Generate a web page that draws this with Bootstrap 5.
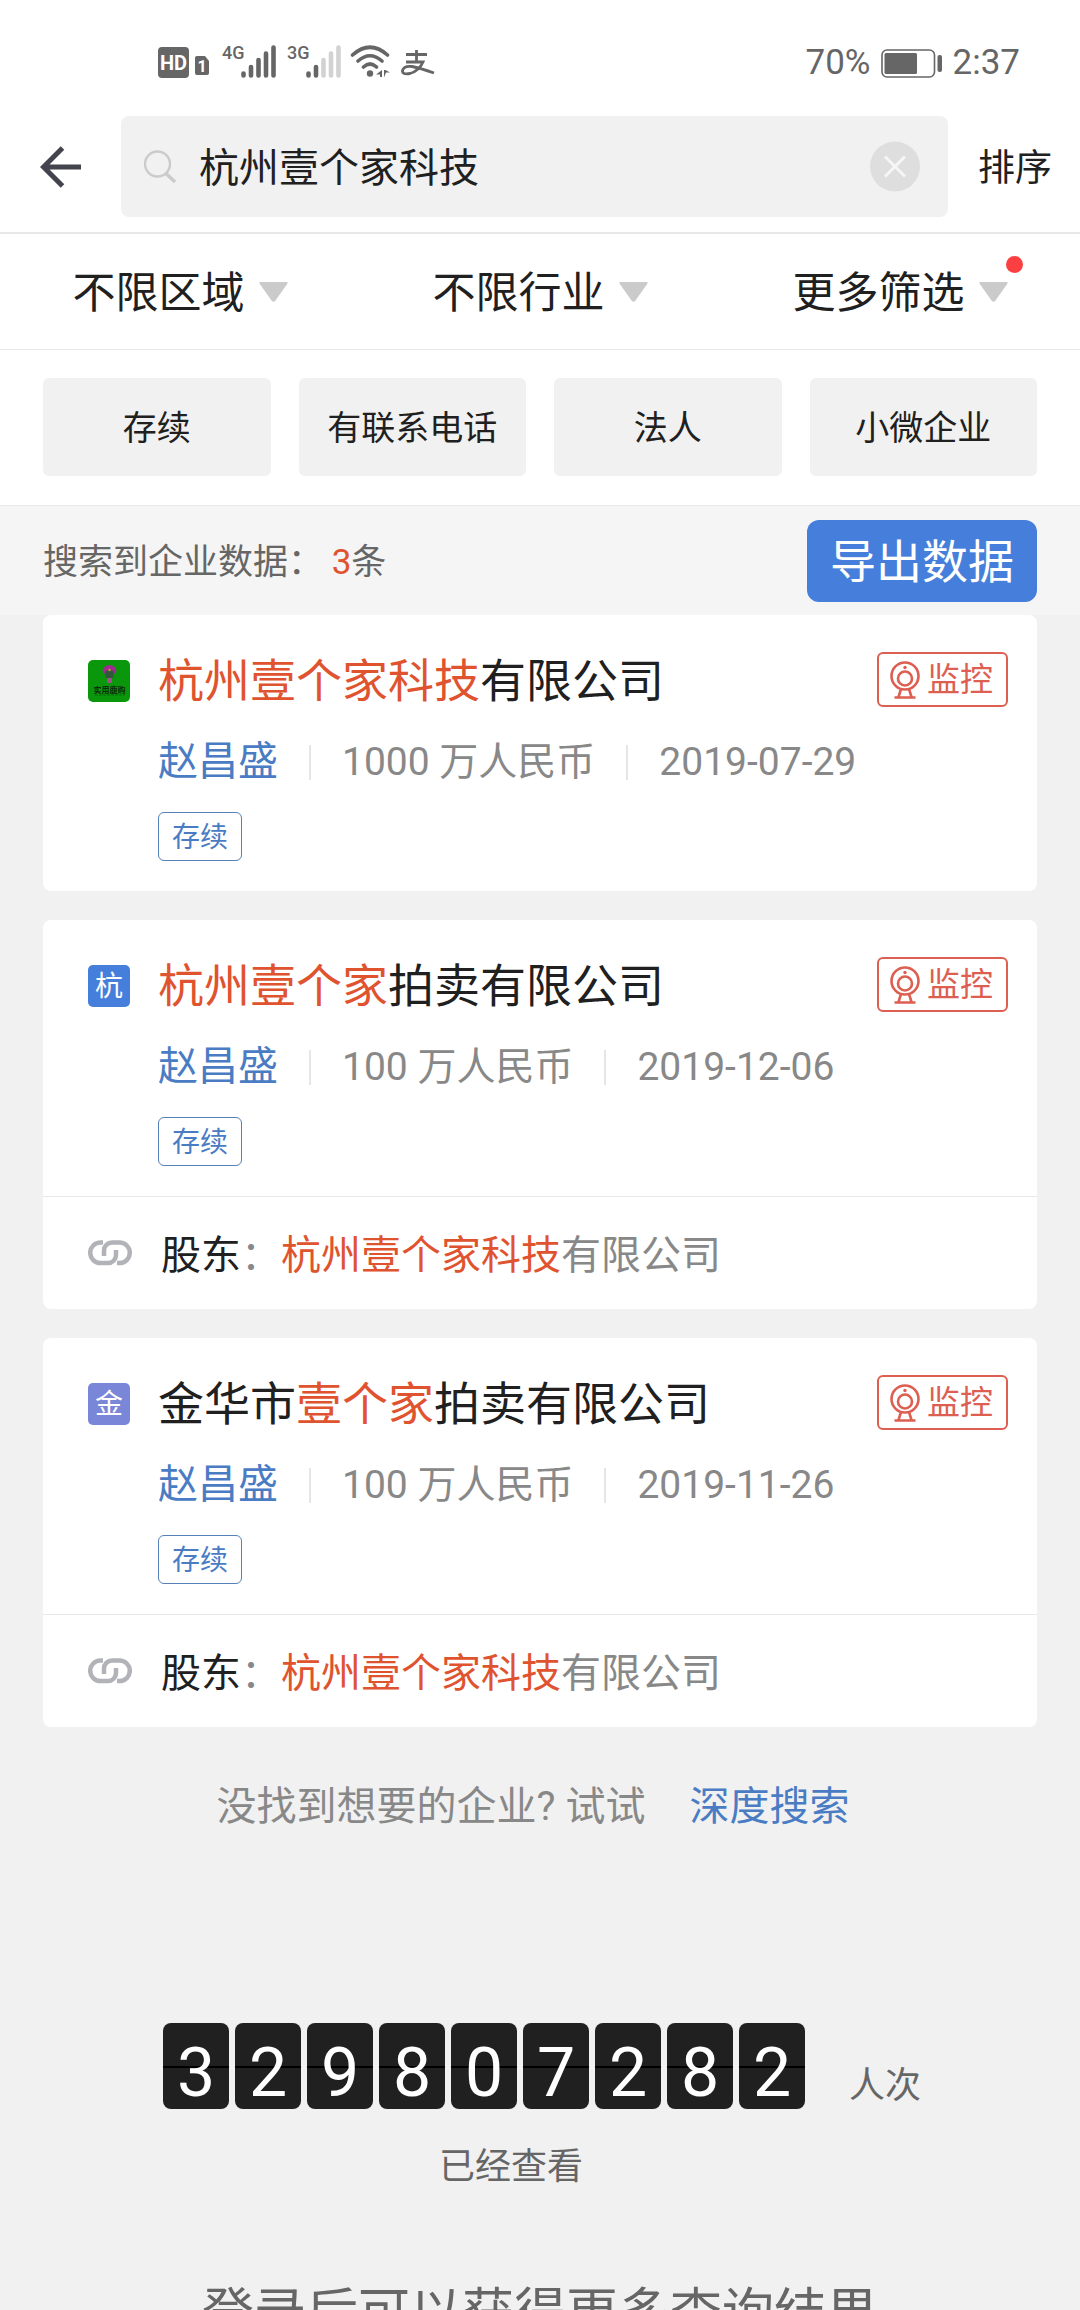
<!DOCTYPE html>
<html lang="zh-CN">
<head>
<meta charset="utf-8">
<meta name="viewport" content="width=device-width, initial-scale=1">
<title>企业搜索</title>
<link href="https://cdn.jsdelivr.net/npm/bootstrap@5.3.0/dist/css/bootstrap.min.css" rel="stylesheet">
<style>
  :root {
    --app-ink: #202020;
    --app-soft: #888;
    --app-dim: #666;
    --app-blue: #467fdb;
    --app-link: #4a7cc4;
    --app-hit: #e0532f;
    --app-alert: #dc5f52;
    --app-fill: #f1f1f1;
    --app-line: #e8e8e8;
  }
  body { font-family: Roboto, "Noto Sans CJK SC", sans-serif; color: var(--app-ink); background: var(--app-fill); }
  a { text-decoration: none; color: var(--app-link); }
  svg { display: block; flex: none; }
  .btn { --bs-btn-line-height: 1; border-radius: 6px; padding: 2px 0 0; }

  .status-bar { height: 102px; padding: 42px 60px 0 157px; color: var(--app-dim); font-size: 35px; line-height: 42px; }
  .status-right { gap: 10px; }
  .top-bar { padding: 14px 28px 15px 40px; border-bottom: 2px solid var(--app-line); }
  .search-box { height: 101px; border-radius: 8px; background: var(--app-fill); padding: 0 28px 0 23px; margin-left: 40px; gap: 23px; }
  .search-box input { font-size: 40px; line-height: 60px; color: var(--app-ink); min-width: 0; padding: 5px 0 0; }
  .top-bar .sort-btn { font-size: 37px; margin-left: 30px; padding-top: 4px; color: var(--app-ink); }
  .top-bar .icon-btn { padding: 0; }

  .filter-bar { height: 116px; border-bottom: 1px solid var(--app-line); }
  .filter-item { gap: 14px; }
  .filter-item select { appearance: none; border: 0; padding: 3px 0 0; background: none; font-size: 43px; line-height: 64px; color: var(--app-ink); }
  .filter-dot { width: 17px; height: 17px; background: #fc4041; right: -15px; top: -2px; }

  .page-x { padding-left: 43px; padding-right: 43px; }
  .chip-row { padding-top: 28px; padding-bottom: 29px; gap: 28px; border-bottom: 1px solid var(--app-line); }
  .chip-row .btn { flex: 1 1 0; height: 98px; background: var(--app-fill); font-size: 34px; color: var(--app-ink); }

  .count-bar { height: 109px; background: #f5f5f5; color: var(--app-dim); font-size: 35px; }
  .count-text { padding-top: 6px; }
  .count-bar .export-btn { width: 230px; height: 82px; border-radius: 12px; background: var(--app-blue); color: #fff; font-size: 46px; }
  .hit { color: var(--app-hit); }

  .result-list { gap: 29px; }
  .result { border: 0; border-radius: 8px; background: #fff; }
  .result .card-body { padding: 37px 29px 30px 45px; gap: 28px; }
  .co-logo { width: 42px; height: 42px; border-radius: 5px; margin-top: 8px; font-size: 28px; line-height: 44px; color: #fff; overflow: hidden; flex: none; }
  .logo-blue { background: var(--app-blue); }
  .logo-violet { background: #7a86d8; }
  .co-name { font-size: 46px; line-height: 52px; padding-top: 3px; font-weight: 400; }
  .watch-btn { width: 131px; height: 55px; border: 2px solid var(--app-alert); color: var(--app-alert); font-size: 33px; gap: 7px; }
  .result .watch-btn { padding: 0 2px 0 0; }
  .co-meta { font-size: 39px; line-height: 54px; margin-top: 28px; color: var(--app-soft); gap: 31px; }
  .co-meta a { font-size: 40px; }
  .meta-rule { width: 2px; height: 35px; background: #e6e6e6; }
  .co-tag { margin-top: 23px; padding: 3px 13px 0; border: 1px solid #5580b8; border-radius: 6px; color: var(--app-link); font-size: 28px; line-height: 44px; }
  .holder { padding: 0 45px; height: 113px; border-top: 1px solid var(--app-line); font-size: 40px; gap: 29px; color: var(--app-soft); }
  .holder-text { padding-top: 5px; }
  .holder b { font-weight: 400; color: var(--app-ink); }

  .more-line { padding: 50px 14px 0 0; gap: 44px; font-size: 40px; line-height: 60px; color: var(--app-soft); }
  .counter { margin-top: 186px; padding-left: 4px; gap: 44px; }
  .flip-row { gap: 6px; }
  .flip { width: 66px; height: 86px; border-radius: 8px; background: linear-gradient(#202020 43px, #000 43px, #000 45px, #202020 45px); color: #fff; font-size: 68px; line-height: 100px; }
  .unit { font-size: 36px; line-height: 46px; color: var(--app-dim); }
  .seen { margin-top: 35px; padding-right: 58px; }
  .login-tip { margin-top: 86px; font-size: 52px; line-height: 76px; color: var(--app-dim); }
</style>
</head>
<body class="vh-100 overflow-hidden">

<!-- icons shared by the filters and the result cards -->
<svg width="0" height="0" class="position-absolute" aria-hidden="true">
  <symbol id="ico-cam" viewBox="0 0 30 38">
    <g fill="none" stroke="currentColor" stroke-width="2.600">
      <circle cx="15" cy="15" r="13.500"/><circle cx="15" cy="17.500" r="7"/>
      <path d="M11 28L8.500 36M19 28L21.500 36M4.500 36.500H25.500"/>
    </g>
    <circle cx="15" cy="6.500" r="1.700" fill="currentColor"/>
  </symbol>
  <symbol id="ico-link" viewBox="0 0 44 26">
    <g fill="none" stroke="#b2b3b8" stroke-width="4.500">
      <path d="M15 2.500H12.500a10.300 10.300 0 0 0 0 20.600H20a8 8 0 0 0 8-8V10"/>
      <path d="M29 23.100H31.500a10.300 10.300 0 0 0 0-20.600H24a8 8 0 0 0-8 8V16"/>
    </g>
  </symbol>
  <symbol id="ico-caret" viewBox="0 0 29 20"><path d="M1.500 0H27.500Q29.500 0 28 2.200L16.500 18.500Q14.500 21 12.500 18.500L1 2.200Q-.5 0 1.500 0Z" fill="#cbcbcb"/></symbol>
</svg>

<header class="bg-white">
  <div class="status-bar d-flex justify-content-between align-items-start">
    <svg width="280" height="40" viewBox="0 0 280 40" role="img" aria-label="HD 4G 3G WLAN" font-family="Roboto, sans-serif" font-weight="700" fill="#666">
      <rect x="1" y="5" width="31" height="31" rx="4"/>
      <text x="16.500" y="27.500" font-size="20" text-anchor="middle" fill="#fff">HD</text>
      <path d="M40 33a2 2 0 0 1-2-2V16a2 2 0 0 1 2-2h8l4 5v12a2 2 0 0 1-2 2z"/>
      <text x="45" y="30" font-size="16" text-anchor="middle" fill="#fff">1</text>
      <text x="65" y="17" font-size="18" font-weight="500">4G</text>
      <g stroke="#666" stroke-width="4.600" stroke-linecap="round">
        <path d="M86.500 31.500V33.500M94 25V33.500M101.500 18V33.500M109 11.500V33.500M116.500 5.500V33.500"/>
        <path d="M151.500 31.500V33.500M159 25V33.500"/>
        <path d="M166.500 18V33.500M174 11.500V33.500M181.500 5.500V33.500" stroke="#d2d2d2"/>
      </g>
      <text x="130" y="17" font-size="18" font-weight="500">3G</text>
      <g fill="none" stroke="#666" stroke-width="3.600" stroke-linecap="round">
        <path d="M195.500 13Q213 -2.500 230.500 13M201 19Q213 8.500 225 19M206.500 25Q213 19 219.500 25"/>
      </g>
      <circle cx="213" cy="31.500" r="3.200"/>
      <path d="M225 28v7h-2v-2.500h-4zM227 35.500v-7.500h1.500l4.500 2.500h-4z"/>
      <g fill="none" stroke="#666" stroke-width="2.800">
        <path d="M249 12.500H270M259.500 8V20M249 20H266Q262 29 253 31.500Q245 33 245.500 28.500Q247 23.500 255 24.500Q263 26 277 31"/>
      </g>
    </svg>
    <div class="status-right d-flex align-items-center">
      <span>70%</span>
      <svg width="62" height="29" viewBox="0 0 62 29" role="img" aria-label="电量">
        <rect x="1" y="1" width="52.500" height="27" rx="5" fill="none" stroke="#666" stroke-width="1.600"/>
        <rect x="3.500" y="4" width="32.500" height="21" rx="1.500" fill="#666"/>
        <rect x="56.500" y="6" width="4.500" height="17" rx="2" fill="#666"/>
      </svg>
      <span>2:37</span>
    </div>
  </div>

  <form class="top-bar d-flex align-items-center" role="search">
    <button type="button" class="btn border-0 icon-btn" aria-label="返回">
      <svg width="41" height="42" viewBox="0 0 41 42" fill="none" stroke="#43444d" stroke-width="5"><path d="M22.500 2L3.500 21L22.500 40M4 21H41"/></svg>
    </button>
    <div class="search-box d-flex align-items-center flex-fill">
      <svg width="32" height="33" viewBox="0 0 32 33" fill="none" stroke="#cbcbcb"><circle cx="13.500" cy="14" r="12.500" stroke-width="2.400"/><path d="M22 23.500L31 32" stroke-width="3.400"/></svg>
      <input type="text" class="flex-fill border-0 bg-transparent" value="杭州壹个家科技" aria-label="搜索企业">
      <button type="button" class="btn border-0 icon-btn" aria-label="清除">
        <svg width="50" height="51" viewBox="0 0 50 51"><circle cx="25" cy="25.500" r="25" fill="#dedede"/><path d="M15 15.500L35 35.500M35 15.500L15 35.500" stroke="#f6f6f6" stroke-width="3"/></svg>
      </button>
    </div>
    <button type="button" class="btn border-0 sort-btn">排序</button>
  </form>

  <div class="filter-bar row g-0 align-items-center">
    <div class="col d-flex justify-content-center">
      <div class="filter-item d-flex align-items-center">
        <select aria-label="区域"><option>不限区域</option></select>
        <svg width="29" height="20"><use href="#ico-caret"/></svg>
      </div>
    </div>
    <div class="col d-flex justify-content-center">
      <div class="filter-item d-flex align-items-center">
        <select aria-label="行业"><option>不限行业</option></select>
        <svg width="29" height="20"><use href="#ico-caret"/></svg>
      </div>
    </div>
    <div class="col d-flex justify-content-center">
      <div class="filter-item d-flex align-items-center position-relative">
        <select aria-label="筛选"><option>更多筛选</option></select>
        <svg width="29" height="20"><use href="#ico-caret"/></svg>
        <span class="filter-dot rounded-circle position-absolute"></span>
      </div>
    </div>
  </div>

  <div class="chip-row page-x d-flex">
    <button type="button" class="btn border-0">存续</button>
    <button type="button" class="btn border-0">有联系电话</button>
    <button type="button" class="btn border-0">法人</button>
    <button type="button" class="btn border-0">小微企业</button>
  </div>
</header>

<div class="count-bar page-x d-flex align-items-center justify-content-between">
  <div class="count-text">搜索到企业数据： <span class="hit">3</span>条</div>
  <button type="button" class="btn border-0 export-btn">导出数据</button>
</div>

<main>
  <div class="result-list page-x d-flex flex-column">

    <article class="card result">
      <div class="card-body d-flex">
        <div class="co-logo">
          <svg width="42" height="42" viewBox="0 0 42 42" role="img" aria-label="企业标志">
            <rect width="42" height="42" fill="#0a970c"/>
            <path d="M14.500 11Q16 5 21.500 5Q27 5 28.500 11Q27.500 13 26 14Q25 10 21.500 9.500Q18 10 17 14Q15 13 14.500 11Z" fill="#a32a92"/>
            <path d="M17 12Q21.500 8 26 12L25 18H18Z" fill="#31583c"/>
            <rect x="19" y="18" width="5" height="5" rx="1" fill="#a0508c"/>
            <circle cx="21.500" cy="10" r="1.200" fill="#d98a3a"/>
            <text x="21.500" y="32.500" font-size="8" font-weight="700" text-anchor="middle" fill="#0b2c0b">实用鹿购</text>
            <path d="M7 35H37" stroke="#086a0a" stroke-dasharray="3 1"/>
          </svg>
        </div>
        <div class="flex-fill">
          <div class="d-flex justify-content-between">
            <h2 class="co-name m-0"><span class="hit">杭州壹个家科技</span>有限公司</h2>
            <button type="button" class="btn watch-btn d-flex align-items-center justify-content-center"><svg width="30" height="38"><use href="#ico-cam"/></svg>监控</button>
          </div>
          <div class="co-meta d-flex align-items-center"><a href="#">赵昌盛</a><span class="meta-rule"></span><span>1000 万人民币</span><span class="meta-rule"></span><span>2019-07-29</span></div>
          <div class="d-flex"><span class="co-tag">存续</span></div>
        </div>
      </div>
    </article>

    <article class="card result">
      <div class="card-body d-flex">
        <div class="co-logo logo-blue text-center">杭</div>
        <div class="flex-fill">
          <div class="d-flex justify-content-between">
            <h2 class="co-name m-0"><span class="hit">杭州壹个家</span>拍卖有限公司</h2>
            <button type="button" class="btn watch-btn d-flex align-items-center justify-content-center"><svg width="30" height="38"><use href="#ico-cam"/></svg>监控</button>
          </div>
          <div class="co-meta d-flex align-items-center"><a href="#">赵昌盛</a><span class="meta-rule"></span><span>100 万人民币</span><span class="meta-rule"></span><span>2019-12-06</span></div>
          <div class="d-flex"><span class="co-tag">存续</span></div>
        </div>
      </div>
      <div class="holder d-flex align-items-center">
        <svg width="44" height="26"><use href="#ico-link"/></svg>
        <div class="holder-text"><b>股东</b>：<span class="hit">杭州壹个家科技</span>有限公司</div>
      </div>
    </article>

    <article class="card result">
      <div class="card-body d-flex">
        <div class="co-logo logo-violet text-center">金</div>
        <div class="flex-fill">
          <div class="d-flex justify-content-between">
            <h2 class="co-name m-0">金华市<span class="hit">壹个家</span>拍卖有限公司</h2>
            <button type="button" class="btn watch-btn d-flex align-items-center justify-content-center"><svg width="30" height="38"><use href="#ico-cam"/></svg>监控</button>
          </div>
          <div class="co-meta d-flex align-items-center"><a href="#">赵昌盛</a><span class="meta-rule"></span><span>100 万人民币</span><span class="meta-rule"></span><span>2019-11-26</span></div>
          <div class="d-flex"><span class="co-tag">存续</span></div>
        </div>
      </div>
      <div class="holder d-flex align-items-center">
        <svg width="44" height="26"><use href="#ico-link"/></svg>
        <div class="holder-text"><b>股东</b>：<span class="hit">杭州壹个家科技</span>有限公司</div>
      </div>
    </article>
  </div>

  <div class="more-line d-flex justify-content-center">
    <span>没找到想要的企业? 试试</span>
    <a href="#">深度搜索</a>
  </div>

  <div class="counter d-flex justify-content-center align-items-end">
    <div class="flip-row d-flex text-center">
      <span class="flip">3</span><span class="flip">2</span><span class="flip">9</span><span class="flip">8</span><span class="flip">0</span><span class="flip">7</span><span class="flip">2</span><span class="flip">8</span><span class="flip">2</span>
    </div>
    <span class="unit">人次</span>
  </div>
  <p class="unit seen text-center mb-0">已经查看</p>
  <p class="login-tip text-center mb-0">登录后可以获得更多查询结果</p>
</main>

<script src="https://cdn.jsdelivr.net/npm/bootstrap@5.3.0/dist/js/bootstrap.bundle.min.js"></script>
</body>
</html>
